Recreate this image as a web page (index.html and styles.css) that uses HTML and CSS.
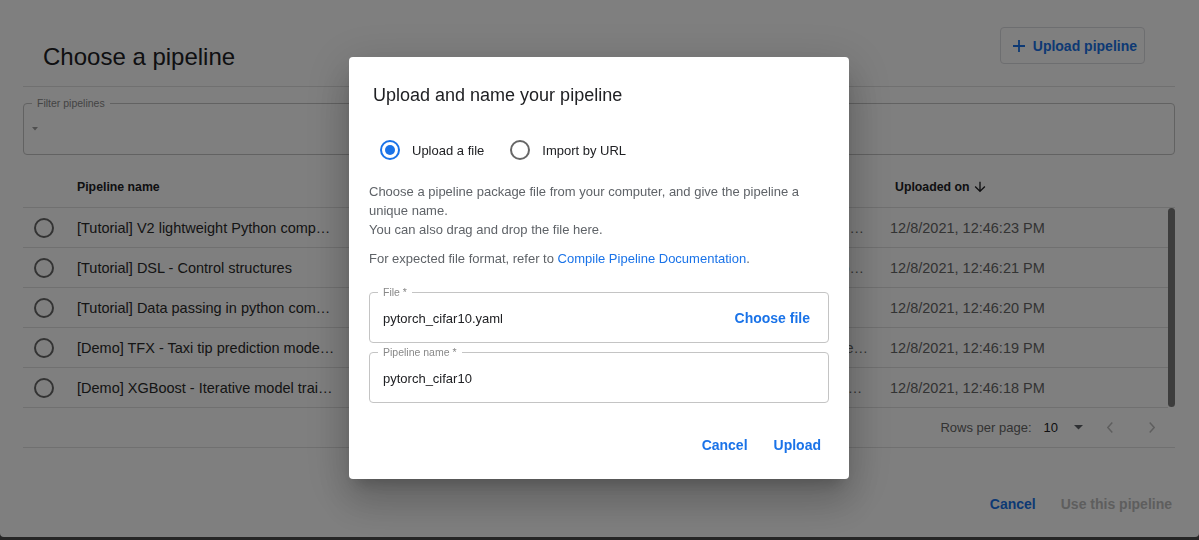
FILE: index.html
```html
<!DOCTYPE html>
<html lang="en">
<head>
<meta charset="utf-8">
<title>Choose a pipeline</title>
<link rel="stylesheet" href="styles.css">
</head>
<body>
<div class="outer">
  <div class="outer-head">
    <h1 class="outer-title">Choose a pipeline</h1>
    <button class="btn-outline">
      <svg class="plus" width="12" height="12" viewBox="0 0 12 12"><path d="M6 0v12M0 6h12" stroke="currentColor" stroke-width="1.8" fill="none"/></svg>
      <span>Upload pipeline</span>
    </button>
  </div>
  <div class="outer-body">
    <fieldset class="filter">
      <legend>Filter pipelines</legend>
      <svg class="filter-icon" width="6" height="4" viewBox="0 0 6 4"><polygon points="0,0 6,0 3,3.5" fill="#9e9e9e"/></svg>
    </fieldset>

    <div class="table">
      <div class="thead">
        <div></div>
        <div class="th">Pipeline name</div>
        <div class="th th-desc">Description</div>
        <div class="th th-date">Uploaded on
          <svg class="sort" width="16" height="16" viewBox="0 0 24 24"><path d="M20 12l-1.41-1.41L13 16.17V4h-2v12.17l-5.58-5.59L4 12l8 8 8-8z" fill="#202124"/></svg>
        </div>
      </div>
      <div class="rows-wrap">
        <div class="rows">
          <div class="row">
            <div class="cell-radio"><span class="radio"></span></div>
            <div class="cell-name">[Tutorial] V2 lightweight Python components</div>
            <div class="cell-desc">[source code](https://github.com/kubeflow/pipelines/tree/master/samples/v2) Shows different component input and output options for KFP v2 components. ...</div>
            <div class="cell-date">12/8/2021, 12:46:23 PM</div>
          </div>
          <div class="row">
            <div class="cell-radio"><span class="radio"></span></div>
            <div class="cell-name">[Tutorial] DSL - Control structures</div>
            <div class="cell-desc">[source code](https://github.com/kubeflow/pipelines/tree/master/samples/tutorials) Shows how to use conditional execution and exit handlers. ...</div>
            <div class="cell-date">12/8/2021, 12:46:21 PM</div>
          </div>
          <div class="row">
            <div class="cell-radio"><span class="radio"></span></div>
            <div class="cell-name">[Tutorial] Data passing in python components</div>
            <div class="cell-desc">[source code](https://github.com/kubeflow/pipelines)</div>
            <div class="cell-date">12/8/2021, 12:46:20 PM</div>
          </div>
          <div class="row">
            <div class="cell-radio"><span class="radio"></span></div>
            <div class="cell-name">[Demo] TFX - Taxi tip prediction model trainer</div>
            <div class="cell-desc">[source code](https://github.com/kubeflow/pipelines/tree/master/samples/core/parameterized_tfx_oss) GCP Permission requirements: https://github.com/kubeflow/pipelines/blob/master/samples/core/parameterized_tfx_oss#permissions</div>
            <div class="cell-date">12/8/2021, 12:46:19 PM</div>
          </div>
          <div class="row">
            <div class="cell-radio"><span class="radio"></span></div>
            <div class="cell-name">[Demo] XGBoost - Iterative model training</div>
            <div class="cell-desc">[source code](https://github.com/kubeflow/pipelines/blob/master/samples/core/train_until_good) This sample demonstrates iterative training using a train-eval-check recursive loop. The main pipeline trains the model</div>
            <div class="cell-date">12/8/2021, 12:46:18 PM</div>
          </div>
        </div>
        <div class="scrollbar"></div>
      </div>
      <div class="pager">
        <span class="pager-label">Rows per page:</span>
        <span class="pager-value">10</span>
        <svg class="pager-drop" width="9" height="5" viewBox="0 0 9 5"><polygon points="0,0 9,0 4.5,4.5" fill="#5f6368"/></svg>
        <svg class="pager-prev" width="6" height="11" viewBox="0 0 6 11"><polyline points="5.3,0.6 0.8,5.5 5.3,10.4" fill="none" stroke="#bdbdbd" stroke-width="1.5"/></svg>
        <svg class="pager-next" width="6" height="11" viewBox="0 0 6 11"><polyline points="0.7,0.6 5.2,5.5 0.7,10.4" fill="none" stroke="#bdbdbd" stroke-width="1.5"/></svg>
      </div>
    </div>
  </div>
  <div class="outer-actions">
    <button class="text-btn">Cancel</button>
    <button class="text-btn disabled">Use this pipeline</button>
  </div>
</div>

<div class="scrim"></div>

<div class="modal">
  <h2 class="modal-title">Upload and name your pipeline</h2>
  <div class="radio-row">
    <label class="radio-opt">
      <span class="radio-box"><span class="radio checked"></span></span>
      <span class="radio-label">Upload a file</span>
    </label>
    <label class="radio-opt">
      <span class="radio-box"><span class="radio"></span></span>
      <span class="radio-label">Import by URL</span>
    </label>
  </div>
  <p class="desc">Choose a pipeline package file from your computer, and give the pipeline a unique name.<br>You can also drag and drop the file here.</p>
  <p class="desc desc2">For expected file format, refer to <a class="link" href="#">Compile Pipeline Documentation</a>.</p>
  <fieldset class="field field-file">
    <legend>File *</legend>
    <div class="field-content">
      <span class="field-value">pytorch_cifar10.yaml</span>
      <button class="text-btn">Choose file</button>
    </div>
  </fieldset>
  <fieldset class="field field-name">
    <legend>Pipeline name *</legend>
    <div class="field-content">
      <span class="field-value">pytorch_cifar10</span>
    </div>
  </fieldset>
  <div class="modal-actions">
    <button class="text-btn">Cancel</button>
    <button class="text-btn">Upload</button>
  </div>
</div>
</body>
</html>
```

FILE: styles.css
```css
* { box-sizing: border-box; }
html, body { margin: 0; height: 100%; }
body {
  background: #4d4d4d;
  font-family: "Liberation Sans", Arial, sans-serif;
  color: #202124;
  overflow: hidden;
}

/* ---------- underlying dialog ---------- */
.outer {
  background: #fff;
  height: 537px;
  display: flex;
  flex-direction: column;
  border-radius: 0 0 4px 4px;
}
.outer-head {
  height: 86px;
  display: flex;
  justify-content: space-between;
  align-items: flex-start;
  padding: 27px 54px 0 43px;
}
.outer-title {
  margin: 16px 0 0;
  font-size: 24px;
  font-weight: 400;
  line-height: 28px;
  color: #202124;
}
.btn-outline {
  height: 37px;
  display: flex;
  align-items: center;
  gap: 8px;
  padding: 0 7px 0 12px;
  border: 1px solid #dadce0;
  border-radius: 4px;
  background: #fff;
  color: #1a73e8;
  font-family: "Liberation Sans", Arial, sans-serif;
  font-weight: 700;
  font-size: 14px;
}
.outer-body {
  margin: 0 24px 0 23px;
  border-top: 1px solid #e0e0e0;
  flex: 1;
}
fieldset {
  margin: 0;
  min-width: 0;
  border: 1px solid #c4c4c4;
  border-radius: 4px;
  padding: 0 8px;
}
legend {
  padding: 0 5px;
  font-size: 10.5px;
  line-height: 12px;
  color: #888;
}
.filter {
  margin-top: 10px;
  height: 58px;
}
.filter-icon {
  display: block;
  margin-top: 18px;
}

.table { margin-top: 12px; }
.thead, .row {
  display: grid;
  grid-template-columns: 54px 268px 545px 1fr;
  align-items: center;
}
.thead {
  height: 41px;
  border-bottom: 1px solid #e0e0e0;
}
.th {
  font-size: 12.3px;
  font-weight: 700;
  color: #202124;
  white-space: nowrap;
}
.th-desc { padding-left: 12px; }
.th-date {
  padding-left: 5px;
  display: flex;
  align-items: center;
}
.sort { margin-left: 3px; }
.rows-wrap { display: flex; }
.rows { flex: 1; }
.scrollbar {
  width: 7px;
  margin-bottom: 1px;
  background: #7a7a7a;
  border-radius: 4px;
}
.row {
  height: 40px;
  border-bottom: 1px solid #e0e0e0;
}
.cell-radio { display: flex; align-items: center; padding-left: 11px; }
.radio {
  display: block;
  width: 20px;
  height: 20px;
  border: 2px solid #666;
  border-radius: 50%;
}
.cell-name, .cell-desc, .cell-date {
  white-space: nowrap;
  overflow: hidden;
  text-overflow: ellipsis;
}
.cell-name {
  font-size: 14.5px;
  color: #2a2a2a;
  padding-right: 9px;
}
.cell-desc {
  font-size: 14.5px;
  color: #666;
  padding: 0 22px 0 12px;
}
.cell-date {
  font-size: 14.5px;
  color: #666;
}
.pager {
  height: 40px;
  border-bottom: 1px solid #e0e0e0;
  display: flex;
  align-items: center;
  justify-content: flex-end;
  padding-right: 20px;
  font-size: 13px;
}
.pager-label { color: #666; }
.pager-value { margin-left: 12px; color: #202124; }
.pager-drop { margin-left: 16px; }
.pager-prev { margin-left: 24px; }
.pager-next { margin-left: 36px; }

.outer-actions {
  display: flex;
  justify-content: flex-end;
  gap: 9px;
  padding: 0 19px 15px 0;
}
.text-btn {
  height: 36px;
  padding: 0 8px;
  border: 0;
  background: none;
  color: #1a73e8;
  font-family: "Liberation Sans", Arial, sans-serif;
  font-weight: 700;
  font-size: 14px;
  border-radius: 4px;
}
.text-btn.disabled { color: #bdbdbd; }

/* ---------- scrim ---------- */
.scrim {
  position: fixed;
  inset: 0;
  background: rgba(0, 0, 0, 0.5);
}

/* ---------- modal ---------- */
.modal {
  position: fixed;
  left: 349px;
  top: 57px;
  width: 500px;
  background: #fff;
  border-radius: 4px;
  padding: 28px 20px 16px;
  box-shadow: 0 11px 15px -7px rgba(0,0,0,.2), 0 24px 38px 3px rgba(0,0,0,.14), 0 9px 46px 8px rgba(0,0,0,.12);
}
.modal-title {
  margin: 0 0 0 4px;
  font-size: 18px;
  font-weight: 400;
  line-height: 21px;
  color: #202124;
}
.radio-row {
  display: flex;
  height: 44px;
  margin: 22px 0 0 -1px;
}
.radio-opt {
  display: flex;
  align-items: center;
  margin-right: 14px;
}
.radio-box {
  width: 44px;
  height: 44px;
  display: flex;
  align-items: center;
  justify-content: center;
}
.radio.checked {
  border-color: #1a73e8;
  position: relative;
}
.radio.checked::after {
  content: "";
  position: absolute;
  left: 3px;
  top: 3px;
  width: 10px;
  height: 10px;
  border-radius: 50%;
  background: #1a73e8;
}
.radio-label {
  font-size: 13px;
  color: #202124;
}
.desc {
  margin: 10px 0 0;
  font-size: 13px;
  line-height: 19px;
  color: #5f6368;
}
.link { color: #1a73e8; text-decoration: none; }
.field {
  height: 57px;
}
.field-file { margin-top: 18px; }
.field-name { margin-top: 3px; }
.field-content {
  height: 44px;
  display: flex;
  align-items: center;
  justify-content: space-between;
  padding: 0 2px 4px 5px;
}
.field-value {
  font-size: 13px;
  color: #202124;
}
.modal-actions {
  display: flex;
  justify-content: flex-end;
  gap: 10px;
  margin-top: 24px;
}
```
